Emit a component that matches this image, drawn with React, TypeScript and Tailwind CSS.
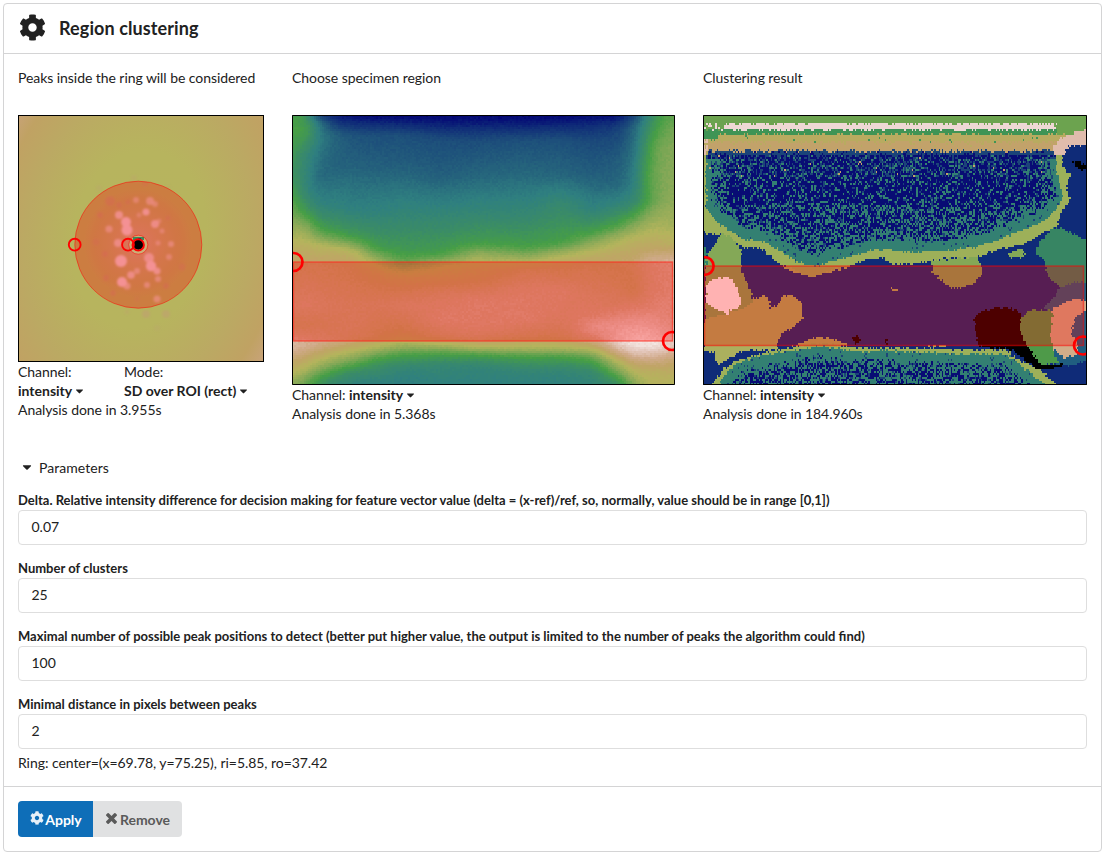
import React, { useMemo } from "react";
import { FaCog, FaCaretDown } from "react-icons/fa";

type Pt = [number, number];
type Sampler = (x: number, y: number) => string;

const rand = (i: number, j: number, s: number) => {
  const v = Math.sin(i * 127.1 + j * 311.7 + s * 74.7) * 43758.5453;
  return v - Math.floor(v);
};

// Merges equal neighbouring cells into one path per colour.
function rasterise(w: number, h: number, cw: number, ch: number, sample: Sampler) {
  const paths = new Map<string, string[]>();
  const cols = Math.ceil(w / cw);
  const rows = Math.ceil(h / ch);
  for (let j = 0; j < rows; j++) {
    let start = 0;
    let cur = sample(0.5 * cw, (j + 0.5) * ch);
    for (let i = 1; i <= cols; i++) {
      const c = i < cols ? sample((i + 0.5) * cw, (j + 0.5) * ch) : "";
      if (c !== cur) {
        const x0 = Math.round(start * cw);
        const x1 = Math.round(i * cw);
        if (!paths.has(cur)) paths.set(cur, []);
        paths.get(cur)!.push(`M${x0} ${j * ch}H${x1}V${(j + 1) * ch}H${x0}Z`);
        start = i;
        cur = c;
      }
    }
  }
  return Array.from(paths.entries());
}

const EARTH: [number, number, number, number][] = [
  [0, 0, 0, 60], [0.03, 2, 4, 116], [0.1, 15, 43, 120], [0.25, 36, 97, 124], [0.33, 47, 127, 128],
  [0.42, 58, 140, 102], [0.5, 70, 158, 70], [0.6, 132, 168, 87], [0.7, 180, 180, 92],
  [0.78, 192, 164, 102], [0.86, 208, 170, 138], [0.93, 228, 200, 190], [1, 252, 248, 248],
];

function earth(v: number) {
  const t = Math.max(0, Math.min(1, v));
  for (let k = 1; k < EARTH.length; k++) {
    if (t <= EARTH[k][0]) {
      const a = EARTH[k - 1];
      const b = EARTH[k];
      const f = (t - a[0]) / (b[0] - a[0]);
      return `rgb(${[1, 2, 3].map((n) => Math.round(a[n] + (b[n] - a[n]) * f)).join(",")})`;
    }
  }
  return "rgb(252,248,248)";
}

// Intensity profiles: x position, then [y, value] stops going down.
const PROFILES: [number, Pt[]][] = [
  [0, [[0, .5], [20, .5], [60, .45], [90, .55], [110, .62], [125, .7], [135, .75], [150, .78], [190, .84], [210, .8], [228, .9], [235, .88], [248, .78], [262, .68], [269, .62]]],
  [14, [[0, .46], [16, .5], [40, .38], [75, .36], [95, .46], [112, .62], [130, .72], [148, .79], [190, .86], [210, .8], [230, .88], [242, .78], [255, .68], [262, .6], [269, .55]]],
  [28, [[0, .15], [10, .3], [25, .32], [60, .26], [90, .35], [112, .48], [120, .56], [130, .7], [148, .79], [190, .84], [210, .81], [228, .86], [240, .75], [252, .62], [262, .5], [269, .45]]],
  [44, [[0, .06], [8, .13], [20, .25], [50, .25], [92, .35], [116, .48], [125, .58], [134, .72], [149, .79], [190, .83], [212, .82], [228, .83], [238, .72], [250, .58], [259, .46], [269, .38]]],
  [60, [[0, .04], [8, .1], [20, .21], [50, .25], [95, .34], [120, .47], [128, .58], [138, .73], [150, .78], [190, .83], [215, .83], [228, .8], [236, .7], [248, .55], [256, .43], [269, .35]]],
  [85, [[0, .03], [9, .1], [20, .2], [50, .24], [98, .35], [132, .48], [142, .6], [150, .7], [160, .76], [190, .83], [222, .79], [230, .72], [240, .56], [248, .45], [269, .33]]],
  [110, [[0, .03], [10, .1], [20, .2], [50, .24], [100, .37], [138, .48], [148, .56], [158, .7], [165, .75], [190, .85], [215, .78], [225, .72], [234, .6], [240, .5], [255, .36], [269, .33]]],
  [150, [[0, .03], [10, .08], [24, .19], [60, .24], [100, .37], [138, .49], [145, .6], [152, .7], [165, .76], [180, .84], [205, .87], [222, .82], [228, .72], [238, .52], [250, .38], [269, .34]]],
  [185, [[0, .03], [10, .08], [25, .19], [60, .26], [100, .38], [128, .49], [138, .62], [150, .73], [165, .77], [185, .87], [215, .86], [226, .8], [232, .7], [240, .5], [252, .36], [269, .34]]],
  [235, [[0, .03], [10, .08], [25, .2], [60, .27], [100, .38], [132, .5], [142, .62], [147, .7], [155, .8], [175, .86], [205, .87], [222, .8], [232, .7], [242, .5], [258, .36], [269, .34]]],
  [270, [[0, .03], [10, .09], [25, .2], [60, .26], [88, .39], [128, .5], [138, .65], [147, .76], [175, .86], [200, .85], [222, .8], [232, .7], [242, .5], [256, .37], [269, .34]]],
  [300, [[0, .04], [10, .1], [25, .18], [60, .24], [95, .35], [118, .5], [128, .62], [140, .74], [150, .79], [175, .83], [200, .86], [212, .92], [222, .86], [229, .8], [235, .68], [243, .53], [258, .38], [269, .36]]],
  [325, [[0, .04], [15, .16], [45, .23], [70, .26], [90, .36], [110, .5], [122, .65], [140, .77], [165, .8], [190, .84], [210, .93], [225, .95], [235, .88], [242, .76], [252, .62], [262, .5], [269, .42]]],
  [342, [[0, .15], [12, .25], [45, .3], [70, .33], [88, .39], [100, .5], [112, .62], [128, .74], [150, .8], [175, .78], [195, .88], [210, .94], [228, .98], [238, .92], [248, .8], [258, .7], [269, .6]]],
  [355, [[0, .36], [30, .46], [60, .51], [85, .5], [98, .58], [118, .7], [135, .78], [147, .86], [165, .84], [190, .86], [210, .94], [228, .98], [240, .9], [250, .78], [265, .7]]],
  [366, [[0, .47], [30, .57], [60, .58], [85, .58], [110, .68], [130, .76], [147, .87], [170, .86], [200, .9], [230, .97], [245, .85], [258, .72]]],
  [382, [[0, .55], [30, .6], [80, .62], [110, .66], [130, .73], [145, .88], [170, .88], [200, .88], [230, .93], [248, .78], [269, .7]]],
];

function along(stops: Pt[], y: number) {
  if (y <= stops[0][0]) return stops[0][1];
  for (let k = 1; k < stops.length; k++) {
    if (y <= stops[k][0]) {
      const [y0, v0] = stops[k - 1];
      const [y1, v1] = stops[k];
      return v0 + ((v1 - v0) * (y - y0)) / (y1 - y0);
    }
  }
  return stops[stops.length - 1][1];
}

function level(x: number, y: number) {
  let k = 1;
  while (k < PROFILES.length - 1 && x > PROFILES[k][0]) k++;
  const [x0, a] = PROFILES[k - 1];
  const [x1, b] = PROFILES[k];
  const f = Math.max(0, Math.min(1, (x - x0) / (x1 - x0)));
  return along(a, y) * (1 - f) + along(b, y) * f;
}

const specimen: Sampler = (x, y) => {
  let v = 0;
  for (const dx of [-6, -2, 2, 6]) for (const dy of [-2.5, 0, 2.5]) v += level(x + dx, y + dy) / 12;
  v += (rand(x, y, 1) - 0.5) * 0.02;
  return earth(Math.round(v * 120) / 120);
};

function inside(poly: Pt[], x: number, y: number) {
  let hit = false;
  for (let i = 0, j = poly.length - 1; i < poly.length; j = i++) {
    const [xi, yi] = poly[i];
    const [xj, yj] = poly[j];
    if (yi > y !== yj > y && x < ((xj - xi) * (y - yi)) / (yj - yi) + xi) hit = !hit;
  }
  return hit;
}

function edgeDistance(line: Pt[], x: number, y: number) {
  let best = 1e9;
  for (let i = 1; i < line.length; i++) {
    const [ax, ay] = line[i - 1];
    const [bx, by] = line[i];
    const dx = bx - ax;
    const dy = by - ay;
    const t = Math.max(0, Math.min(1, ((x - ax) * dx + (y - ay) * dy) / (dx * dx + dy * dy)));
    best = Math.min(best, Math.hypot(x - ax - t * dx, y - ay - t * dy));
  }
  return best;
}

const UPPER_INNER: Pt[] = [
  [3, 36], [3, 92], [9, 102], [18, 110], [29, 118], [42, 125], [62, 127], [79, 137], [92, 146], [104, 150], [113, 151], [125, 147],
  [135, 145], [152, 140], [172, 135], [190, 135], [205, 137], [223, 137], [250, 135], [273, 132], [300, 123], [323, 113],
  [343, 105], [354, 93], [360, 80], [356, 66], [352, 53], [354, 36],
];
const UPPER_OUTER: Pt[] = [
  [-5, 30], [-5, 105], [0, 118], [12, 119], [22, 119], [32, 126], [40, 133], [59, 134], [75, 148], [89, 154], [100, 160], [109, 162],
  [125, 157], [138, 152], [152, 149], [165, 144], [180, 143], [190, 150], [223, 147], [240, 143], [273, 142], [300, 133],
  [323, 128], [337, 120], [355, 110], [357, 97], [367, 87], [363, 73], [367, 60], [358, 50], [361, 36], [361, 30],
];
const LOWER_INNER: Pt[] = [
  [14, 275], [20, 263], [32, 249], [55, 241], [75, 238], [92, 235], [115, 231], [150, 236], [190, 236], [250, 239], [300, 239], [313, 246], [328, 259], [345, 272],
];
const LOWER_OUTER: Pt[] = [
  [5, 275], [12, 266], [20, 254], [32, 247], [50, 241], [70, 236], [92, 232], [120, 228], [142, 232], [190, 233], [250, 234], [302, 235], [320, 248], [337, 255], [356, 272],
];

const PATCHES: [string, Pt[]][] = [
  ["#378563", [[332, 137], [338, 125], [350, 112], [361, 114], [380, 124], [385, 124], [385, 166], [370, 167], [357, 173], [344, 160], [341, 145]]],
  ["#205e80", [[340, 192], [352, 180], [357, 173], [370, 167], [385, 167], [385, 246], [370, 250], [352, 250], [350, 230], [350, 200]]],
  ["#84a857", [[228, 146], [246, 144], [272, 142], [278, 150], [279, 158], [270, 169], [250, 174], [241, 168], [229, 157]]],
  ["#84a857", [[305, 138], [316, 134], [323, 137], [318, 142], [307, 142]]],
  ["#84a857", [[2, 145], [7, 136], [12, 128], [19, 117], [28, 120], [38, 136], [37, 155], [45, 170], [49, 180], [47, 190], [22, 200], [2, 205]]],
  ["#2f8468", [[0, 132], [4, 132], [3, 152], [0, 155]]],
  ["#abb05e", [[0, 204], [22, 200], [47, 190], [50, 183], [62, 181], [67, 188], [66, 194], [75, 190], [80, 180], [90, 180], [99, 189], [100, 203], [92, 211], [79, 218], [74, 228], [74, 234], [40, 236], [20, 247], [14, 250], [12, 237], [0, 236]]],
  ["#ffffff", [[3, 170], [10, 164], [22, 162], [30, 166], [34, 175], [37, 182], [37, 191], [26, 195], [24, 200], [12, 193], [3, 188]]],
  ["#abb05e", [[75, 151], [92, 153], [109, 155], [152, 151], [130, 156], [110, 162], [95, 159], [86, 155]]],
  ["#abb05e", [[88, 231], [105, 225], [120, 222], [136, 226], [146, 231]]],
  ["#abb05e", [[226, 231], [232, 229], [247, 231]]],
  ["#abb05e", [[189, 173], [195, 174], [194, 176], [189, 175]]],
  ["#000000", [[271, 202], [280, 196], [302, 192], [317, 197], [319, 204], [316, 213], [322, 228], [334, 244], [342, 250], [360, 249], [351, 253], [336, 256], [324, 247], [310, 235], [275, 231], [272, 217]]],
  ["#4e9a49", [[324, 196], [352, 195], [351, 220], [350, 240], [357, 248], [338, 250], [334, 244], [322, 228], [316, 213], [318, 204]]],
  ["#d1ad89", [[350, 193], [373, 184], [383, 186], [383, 195], [371, 205], [368, 217], [374, 228], [373, 240], [362, 243], [350, 234], [347, 222]]],
  ["#000000", [[149, 224], [154, 220], [158, 225], [156, 229], [150, 228]]],
  ["#000000", [[180, 224], [184, 224], [183, 229]]],
  ["#000000", [[370, 47], [374, 46], [382, 51], [381, 54], [375, 55], [373, 51]]],
];

const cluster: Sampler = (x, y) => {
  const jx = x + (rand(x, y, 2) - 0.5) * 2.4;
  const jy = y + (rand(x, y, 3) - 0.5) * 2.4;
  const n = rand(x, y, 4);

  const topEnd = 352 + (rand(x, y, 5) - 0.5) * 4;
  if (y < 40) {
    if (inside([[348, 34], [355, 26], [362, 21], [372, 17], [385, 15], [385, 30], [366, 31], [360, 40], [352, 42]], jx, jy)) return "#e0bcac";
    if (x > 356 && y > 26) return "#0f2b78";
    if (x < 5 && y > 24) return n > 0.3 ? "#e0bcac" : "#b8ab60";
    if (jy < 8.5) return "#6ca34f";
    if (jy < 14.6) {
      const threshold = x < 22 ? 0.72 : x > topEnd ? 1.1 : 0;
      if (n >= threshold) return "#eed8d4";
      return "#6ca34f";
    }
    if (jy < 19.5 || (x < 15 && jy < 24)) return x > 354 ? "#6ca34f" : "#3f9455";
    if (jy < 26.5) return n < 0.02 ? "#3f9455" : "#b8ab60";
    if (jy < 36 + (n - 0.5) * 3) return n < 0.08 && jy < 31 ? "#b8ab60" : "#c2a26a";
  }
  if (inside(UPPER_INNER, jx, jy) || (y < 44 && x > 4 && x < 350)) {
    if (y < 40 && n < 0.65) return "#1b4478";
    if (y < 62 && n < 0.012) return "#c2a26a";
    const d = edgeDistance(UPPER_INNER, x, y);
    const band = y > 85 ? 10 : 5;
    const p = y < 44 ? 0.1 : d < band ? 0.96 : d < 22 ? 0.66 - (d - band) * 0.022 : y > 90 ? 0.36 : 0.2;
    if (n < p) return "#338072";
    if (n > (y < 62 ? 0.75 : 0.91)) return "#1b4478";
    return "#080c74";
  }
  if (inside(UPPER_OUTER, jx, jy)) return "#9db059";
  if (inside(LOWER_INNER, jx, jy)) {
    const d = edgeDistance(LOWER_INNER, x, y);
    const p = d < 9 ? 0.96 : d < 15 ? 0.64 : 0.46;
    return n < p ? "#338072" : n > 0.93 ? "#1b4478" : "#080c74";
  }
  if (inside(LOWER_OUTER, jx, jy)) return "#9db059";
  for (let k = PATCHES.length - 1; k >= 0; k--) {
    if (inside(PATCHES[k][1], jx, jy)) return PATCHES[k][0];
  }
  return "#0f2b78";
};

function Raster({ w, h, cw, ch, sample }: { w: number; h: number; cw: number; ch: number; sample: Sampler }) {
  const layers = useMemo(() => rasterise(w, h, cw, ch, sample), [w, h, cw, ch, sample]);
  return (
    <g shapeRendering="crispEdges">
      {layers.map(([fill, d]) => (
        <path key={fill} fill={fill} d={d.join("")} />
      ))}
    </g>
  );
}

// Peaks: x, y, radius, opacity.
const PEAKS: [number, number, number, number][] = [
  [92, 86, 5, .35], [101, 90, 3, .3], [118, 85, 3, .5], [132, 86, 4, .6], [137, 89, 3, .5], [110, 87, 2.5, .3],
  [101, 100, 4, .85], [108, 107, 5, 1], [109, 115, 5.5, 1], [128, 97, 3.6, .9], [121, 100, 2.5, .4], [82, 100, 3, .35],
  [91, 114, 3.6, .6], [137, 109, 4, .8], [141, 106, 2.5, .4], [144, 116, 2.5, .5], [150, 103, 2.5, .3], [150, 72, 2.5, .1],
  [100, 128, 4, .75], [140, 128, 2.5, .5], [153, 129, 3, .6], [151, 142, 3, .5], [87, 139, 3, .35], [78, 127, 3.5, .25],
  [103, 146, 6, 1], [131, 143, 5, .8], [133, 151, 5.2, 1], [139, 156, 3.5, .85], [140, 164, 3, .6], [113, 160, 3.8, .8],
  [119, 156, 3, .6], [104, 167, 5, 1], [109, 171, 3.5, .65], [129, 170, 3, .6], [148, 171, 3, .35], [88, 163, 3, .35],
  [95, 178, 3, .35], [139, 184, 3.5, .6], [164, 152, 3.5, .3], [119, 184, 3, .15], [128, 199, 4, .3], [148, 199, 4, .3],
  [109, 197, 2.5, .15], [139, 213, 3, .12], [81, 73, 3, .12], [116, 63, 3, .15], [127, 69, 3, .2],
];

function PeaksPlot() {
  return (
    <svg className="block h-[247px] w-[246px]" viewBox="0 0 246 247">
      <defs>
        <radialGradient id="field" gradientUnits="userSpaceOnUse" cx="0" cy="0" r="1" gradientTransform="translate(121 124) rotate(9) scale(158 212)">
          <stop offset="0" stopColor="#b6b45e" />
          <stop offset="0.42" stopColor="#b7b45e" />
          <stop offset="0.72" stopColor="#bba963" />
          <stop offset="0.9" stopColor="#c0a263" />
          <stop offset="1" stopColor="#c7a376" />
        </radialGradient>
        <radialGradient id="glow" gradientUnits="userSpaceOnUse" cx="120" cy="128" r="55">
          <stop offset="0" stopColor="#d0a78d" stopOpacity="1" />
          <stop offset="0.38" stopColor="#cba478" stopOpacity=".75" />
          <stop offset="0.8" stopColor="#c1a066" stopOpacity=".45" />
          <stop offset="1" stopColor="#c1a066" stopOpacity="0" />
        </radialGradient>
        <filter id="soft" x="-20%" y="-20%" width="140%" height="140%">
          <feGaussianBlur stdDeviation="1.3" />
        </filter>
      </defs>
      <rect width="246" height="247" fill="url(#field)" />
      <circle cx="120" cy="128" r="55" fill="url(#glow)" />
      <g filter="url(#soft)">
        {PEAKS.map(([x, y, r, o], i) => (
          <circle key={i} cx={x} cy={y} r={r} opacity={o} fill={o < 0.4 ? "#c88a80" : "#efd0d4"} />
        ))}
      </g>
      <circle cx="120.3" cy="129.5" r="9.5" fill="#cbb078" />
      <path fill="#388a58" d="M115 122h11v3h-11z" />
      <path fill="#103080" d="M120 123h3v2h-3z" />
      <circle cx="120.3" cy="129.8" r="5" fill="#000" />
      <path
        fill="#ff0000"
        fillOpacity=".3"
        fillRule="evenodd"
        stroke="#ff0000"
        strokeOpacity=".5"
        d="M56.8 129.7a63.5 63.5 0 1 0 127 0a63.5 63.5 0 1 0 -127 0ZM110.8 129.7a9.5 9.5 0 1 1 19 0a9.5 9.5 0 1 1 -19 0Z"
      />
      <g fill="none" stroke="#ff0000" strokeWidth="1.9">
        <circle cx="56.7" cy="129.7" r="5.9" />
        <circle cx="110" cy="129.7" r="5.9" />
        <circle cx="120.2" cy="129.9" r="5.7" />
      </g>
      <rect x=".5" y=".5" width="245" height="246" fill="none" stroke="#000" />
    </svg>
  );
}

function SpecimenPlot() {
  return (
    <svg className="block h-[270px] w-[383px]" viewBox="0 0 383 270">
      <Raster w={383} h={270} cw={2} ch={2} sample={specimen} />
      <rect x="1.5" y="147" width="379" height="79" fill="#ff0000" fillOpacity=".3" stroke="#ff2a1c" strokeOpacity=".7" strokeWidth="1.3" />
      <g fill="none" stroke="#ff0000" strokeWidth="2.7">
        <circle cx="1.5" cy="147" r="9" />
        <circle cx="380" cy="226" r="9" />
      </g>
      <path d="M.5 .5h382v269h-382Z" fill="none" stroke="#000" />
    </svg>
  );
}

function ClusterPlot() {
  return (
    <svg className="block h-[270px] w-[384px]" viewBox="0 0 384 270">
      <Raster w={384} h={270} cw={1.5} ch={2} sample={cluster} />
      <rect x="1.5" y="151" width="379" height="79.5" fill="#ff0000" fillOpacity=".3" stroke="#ff0000" strokeOpacity=".5" strokeWidth="1.5" />
      <g fill="none" stroke="#ff0000" strokeWidth="2.7">
        <circle cx="1.8" cy="151" r="8.8" />
        <circle cx="380" cy="230.5" r="9" />
      </g>
      <path d="M.5 .5h383v269h-383Z" fill="none" stroke="#000" />
    </svg>
  );
}

function CrossIcon({ className }: { className?: string }) {
  return (
    <svg className={className} viewBox="302 366 1188 1188" fill="currentColor">
      <path d="M1490 1322q0 40-28 68l-136 136q-28 28-68 28t-68-28l-294-294-294 294q-28 28-68 28t-68-28l-136-136q-28-28-28-68t28-68l294-294-294-294q-28-28-28-68t28-68l136-136q28-28 68-28t68 28l294 294 294-294q28-28 68-28t68 28l136 136q28 28 28 68t-28 68l-294 294 294 294q28 28 28 68z" />
    </svg>
  );
}

function Picker({ children }: { children: React.ReactNode }) {
  return (
    <span className="inline-flex items-center font-bold tracking-normal">
      {children}
      <FaCaretDown className="ml-[3px] h-3 w-[9px]" />
    </span>
  );
}

function Field({ label, value }: { label: string; value: string }) {
  return (
    <div className="flex h-[68px] flex-col">
      <div className="h-[19px] text-[13px] leading-[18px] font-bold whitespace-nowrap">{label}</div>
      <div className="flex h-[35px] items-center rounded border border-[#dedede] px-[12.5px] pb-[2px] leading-[17px]">{value}</div>
    </div>
  );
}

export default function App() {
  return (
    <div className="h-[854px] w-[1103px] bg-white pt-[3px] pl-[3px] font-['Lato',sans-serif] text-[14px] text-[#212121]">
      <div className="flex h-[849px] w-[1099px] flex-col rounded border border-[#d4d4d5]">
        <header className="flex h-[50px] items-center border-b border-[#d4d4d5] pb-[2px] pl-[15px]">
          <FaCog className="size-[27px]" />
          <h1 className="ml-[13px] text-[18px] leading-6 font-bold tracking-[0.1px]">Region clustering</h1>
        </header>

        <main className="flex flex-1 flex-col px-[14px] pt-[14px]">
          <div className="flex h-[382px] gap-7 tracking-[-0.06px]">
            <section className="w-[246px]">
              <div className="h-[47px] leading-5 whitespace-nowrap">Peaks inside the ring will be considered</div>
              <PeaksPlot />
              <div className="flex leading-[19px]">
                <div className="w-[106px]">
                  Channel:
                  <br />
                  <Picker>intensity</Picker>
                </div>
                <div>
                  Mode:
                  <br />
                  <Picker>SD over ROI (rect)</Picker>
                </div>
              </div>
              <div className="leading-[19px]">Analysis done in 3.955s</div>
            </section>
            <section className="w-[383px]">
              <div className="h-[47px] leading-5">Choose specimen region</div>
              <SpecimenPlot />
              <div className="leading-[19px]">
                Channel: <Picker>intensity</Picker>
              </div>
              <div className="leading-[19px]">Analysis done in 5.368s</div>
            </section>
            <section className="w-[384px]">
              <div className="h-[47px] leading-5">Clustering result</div>
              <ClusterPlot />
              <div className="leading-[19px]">
                Channel: <Picker>intensity</Picker>
              </div>
              <div className="leading-[19px]">Analysis done in 184.960s</div>
            </section>
          </div>

          <div className="flex h-[41px] items-center pb-1.5 pl-1">
            <FaCaretDown className="mb-0.5 h-3.5 w-[10px]" />
            <span className="ml-[7px] tracking-[0.05px]">Parameters</span>
          </div>

          <Field
            label="Delta. Relative intensity difference for decision making for feature vector value (delta = (x-ref)/ref, so, normally, value should be in range [0,1])"
            value="0.07"
          />
          <Field label="Number of clusters" value="25" />
          <Field
            label="Maximal number of possible peak positions to detect (better put higher value, the output is limited to the number of peaks the algorithm could find)"
            value="100"
          />
          <Field label="Minimal distance in pixels between peaks" value="2" />
          <div className="-mt-[10px] leading-5 tracking-[-0.05px]">Ring: center=(x=69.78, y=75.25), ri=5.85, ro=37.42</div>
        </main>

        <footer className="flex h-[65px] border-t border-[#d4d4d5] pt-[14px] pl-[14px] font-bold">
          <button className="flex h-9 w-[75px] items-center justify-center rounded-l bg-[#0e6eb8] pl-px text-white">
            <FaCog className="mb-[3px] size-[14px] opacity-90" />
            <span className="ml-px">Apply</span>
          </button>
          <button className="flex h-9 w-[89px] items-center justify-center rounded-r bg-[#e0e1e2] pl-px text-[#5a5a5a]">
            <CrossIcon className="mr-[3px] mb-px size-[11px]" />
            Remove
          </button>
        </footer>
      </div>
    </div>
  );
}
